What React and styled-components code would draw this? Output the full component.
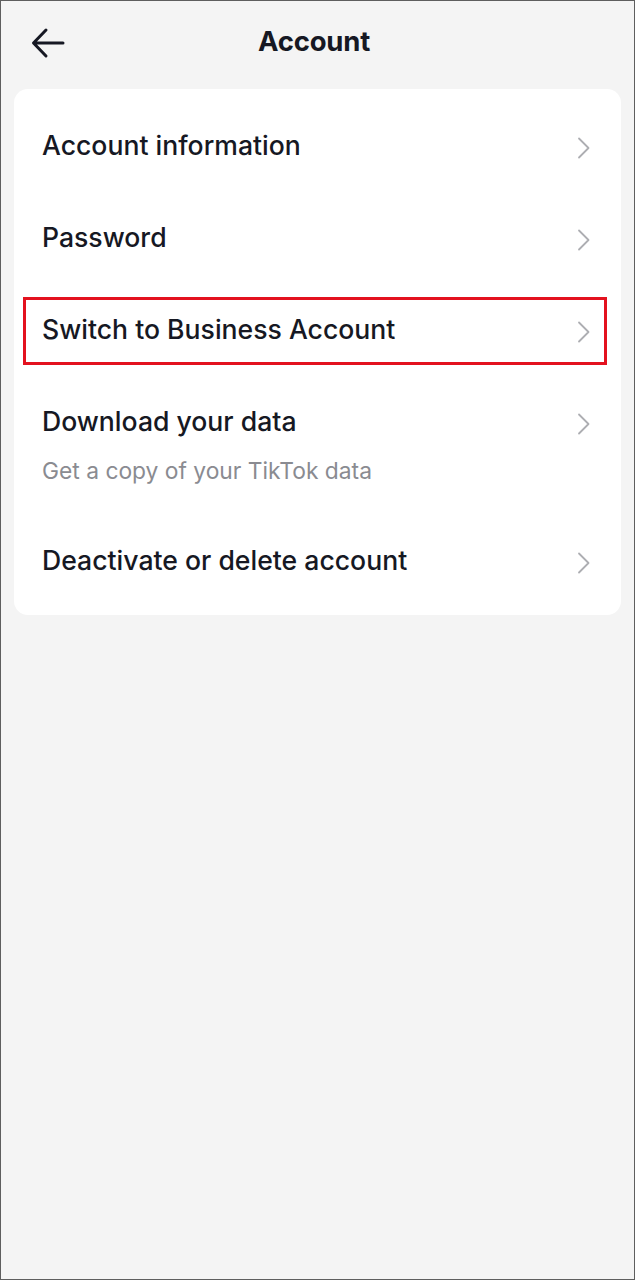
import React from "react";
import styled, { createGlobalStyle } from "styled-components";

const GlobalStyle = createGlobalStyle`
  html, body {
    margin: 0;
    padding: 0;
    background: #f4f4f4;
  }
  * {
    box-sizing: border-box;
  }
`;

const Screen = styled.div`
  height: 1280px;
  background: #f4f4f4;
  border: 1px solid #5e5e5e;
  font-family: "Inter", "Liberation Sans", sans-serif;
  color: #161823;
`;

const Header = styled.div`
  display: grid;
  grid-template-columns: 64px 1fr 64px;
  align-items: center;
  height: 86px;
  padding: 0 0 2px 29px;
`;

const BackButton = styled.button`
  display: flex;
  align-items: center;
  justify-content: flex-start;
  width: 40px;
  height: 40px;
  padding: 0;
  border: none;
  background: none;
  color: #161823;
`;

const Title = styled.h1`
  margin: 0 0 4px;
  text-align: center;
  font-size: 27.5px;
  font-weight: 700;
  letter-spacing: -0.2px;
  padding-right: 36px;
`;

const Card = styled.div`
  margin: 2px 13px 0 13px;
  background: #ffffff;
  border-radius: 14px;
  padding: 10px 0 9px;
`;

const Row = styled.div`
  position: relative;
  display: flex;
  align-items: flex-start;
  justify-content: space-between;
  padding: ${(p) => (p.$sub ? "32px 29px 29px 28px" : "32px 29px 32px 28px")};
`;

const RowText = styled.div`
  display: flex;
  flex-direction: column;
  gap: 22px;
`;

const RowTitle = styled.div`
  font-size: 26.6px;
  font-weight: 500;
  line-height: 28px;
  letter-spacing: 0;
`;

const RowSub = styled.div`
  font-size: 22.8px;
  font-weight: 400;
  line-height: 28px;
  color: #8a8b91;
`;

const Chevron = styled.svg`
  flex: none;
  width: 14px;
  height: 22px;
  margin-top: 6px;
  margin-right: 1px;
`;

const Highlight = styled.div`
  position: absolute;
  top: 14px;
  bottom: 10px;
  left: 9px;
  right: 14px;
  border: 3px solid #e3121f;
  pointer-events: none;
`;

const items = [
  { title: "Account information" },
  { title: "Password" },
  { title: "Switch to Business Account", highlight: true },
  { title: "Download your data", sub: "Get a copy of your TikTok data" },
  { title: "Deactivate or delete account" },
];

const ChevronIcon = () => (
  <Chevron viewBox="0 0 14 22" fill="none">
    <path
      d="M2 1.5 L11.5 11 L2 20.5"
      stroke="#adaeb2"
      strokeWidth="1.8"
      strokeLinecap="round"
      strokeLinejoin="round"
    />
  </Chevron>
);

export default function App() {
  return (
    <>
      <GlobalStyle />
      <Screen>
        <Header>
          <BackButton aria-label="Back">
            <svg width="36" height="32" viewBox="0 0 36 32" fill="none">
              <path
                d="M4 16 H33 M16 3 L3.5 16 L16 29"
                stroke="#161823"
                strokeWidth="3"
                strokeLinecap="round"
                strokeLinejoin="round"
              />
            </svg>
          </BackButton>
          <Title>Account</Title>
          <div />
        </Header>
        <Card>
          {items.map((item) => (
            <Row key={item.title} $sub={!!item.sub}>
              <RowText>
                <RowTitle>{item.title}</RowTitle>
                {item.sub && <RowSub>{item.sub}</RowSub>}
              </RowText>
              <ChevronIcon />
              {item.highlight && <Highlight />}
            </Row>
          ))}
        </Card>
      </Screen>
    </>
  );
}
